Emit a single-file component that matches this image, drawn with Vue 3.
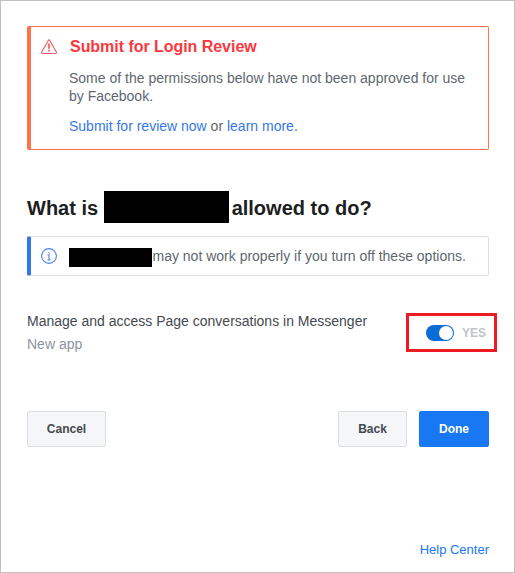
<script setup>
import { ref } from 'vue'

const enabled = ref(true)
</script>

<template>
  <main class="dialog">
    <section class="notice warning">
      <svg class="icon" width="16" height="16" viewBox="0 0 16 16" fill="none">
        <path d="M7.3 1.4Q8 .2 8.7 1.4L15.3 13Q15.9 14.3 14.6 14.5H1.4Q.1 14.3 .7 13Z" stroke="#fa5a62" stroke-width="1.1" />
        <path d="M8 4.4V9.8M8 10.8V12.4" stroke="#fa4b55" stroke-width="1.6" />
      </svg>
      <div class="notice-body">
        <h2>Submit for Login Review</h2>
        <p class="message">Some of the permissions below have not been approved for use<br>by Facebook.</p>
        <p class="links"><a>Submit for review now</a> or <a>learn more</a>.</p>
      </div>
    </section>

    <h1>
      <span>What is</span>
      <span class="redacted app-name"></span>
      <span class="question">allowed to do?</span>
    </h1>

    <section class="notice info">
      <svg class="icon" width="16" height="16" viewBox="0 0 16 16" fill="none">
        <circle cx="8" cy="8" r="7.4" stroke="#4a82ea" stroke-width="1.1" />
        <path d="M8 4V5.6M6.5 7H8V11.6M6.5 11.7H9.5" stroke="#6f9cef" stroke-width="1.4" />
      </svg>
      <span class="redacted short-name"></span>
      <span class="info-text">may not work properly if you turn off these options.</span>
    </section>

    <section class="permission">
      <div class="permission-text">
        <div class="label">Manage and access Page conversations in Messenger</div>
        <div class="sub">New app</div>
      </div>
      <div class="switch-frame">
        <button class="switch" :class="{ on: enabled }" @click="enabled = !enabled"><i></i></button>
        <span class="state">{{ enabled ? 'YES' : 'NO' }}</span>
      </div>
    </section>

    <div class="actions">
      <button class="btn cancel">Cancel</button>
      <button class="btn back">Back</button>
      <button class="btn primary">Done</button>
    </div>

    <footer><a>Help Center</a></footer>
  </main>
</template>

<style>
body {
  margin: 0;
  background: #fff;
}
</style>

<style scoped>
.dialog {
  box-sizing: border-box;
  width: 515px;
  height: 573px;
  padding: 25px 25px 0 26px;
  border: 1px solid #c0c0c0;
  overflow: hidden;
  background: #fff;
  color: #606770;
  font: 14px/18px "Liberation Sans", Arial, sans-serif;
  white-space: nowrap;
}
h1, h2, p {
  margin: 0;
}
a {
  color: #3578e5;
}
.notice {
  box-sizing: border-box;
  display: flex;
  border: 1px solid #dadde1;
  border-left: 4px solid #3578e5;
  border-radius: 2px;
}
.icon {
  flex: none;
  margin-left: 10px;
}
.warning {
  height: 124px;
  border-color: #fb724b;
}
.warning .icon {
  margin-top: 12px;
}
.notice-body {
  margin-left: 12px;
  padding-top: 10px;
}
h2 {
  margin-left: 1px;
  color: #fa383e;
  font-size: 16px;
  line-height: 20px;
  letter-spacing: -0.04px;
}
.message {
  margin-top: 12px;
}
.links {
  margin-top: 12px;
}
h1 {
  display: flex;
  align-items: center;
  height: 32px;
  margin-top: 41px;
  color: #1c1e21;
  font-size: 20px;
  line-height: 24px;
}
h1 span:not(.redacted) {
  padding-top: 2px;
}
.redacted {
  flex: none;
  background: #000;
}
.app-name {
  width: 125px;
  height: 32px;
  margin: 0 2.5px 0 6px;
}
.info {
  align-items: center;
  height: 40px;
  margin-top: 13px;
}
.short-name {
  width: 83px;
  height: 19px;
  margin: 3px 0.5px 0 12px;
}
.permission {
  display: flex;
  justify-content: space-between;
  height: 39px;
  margin: 37px -8px 0 0;
}
.permission-text {
  margin-top: -1px;
}
.label {
  color: #444950;
}
.sub {
  margin-top: 5px;
  color: #8d949e;
}
.switch-frame {
  box-sizing: border-box;
  display: flex;
  align-items: center;
  width: 91px;
  height: 39px;
  padding-left: 17px;
  border: 3px solid #ed1c24;
}
.switch {
  box-sizing: border-box;
  display: flex;
  width: 28px;
  height: 16px;
  padding: 1px;
  border: 0;
  border-radius: 8px;
  background: #bec3c9;
}
.switch.on {
  justify-content: flex-end;
  background: #0a6cd6;
}
.switch i {
  width: 14px;
  height: 14px;
  border-radius: 50%;
  background: #fff;
}
.state {
  margin-left: 8px;
  color: #bec3c9;
  font-size: 12px;
  font-weight: bold;
}
.actions {
  display: flex;
  margin-top: 59px;
}
.btn {
  box-sizing: border-box;
  height: 36px;
  padding: 0;
  border: 1px solid #dadde1;
  border-radius: 2px;
  background: #f5f6f7;
  color: #444950;
  font: bold 12px/34px "Liberation Sans", Arial, sans-serif;
}
.cancel {
  width: 79px;
  margin-right: auto;
}
.back {
  width: 69px;
  margin-right: 12px;
}
.primary {
  width: 70px;
  border-color: #1877f2;
  background: #1877f2;
  color: #fff;
}
footer {
  margin-top: 94px;
  font-size: 13px;
  text-align: right;
}
footer a {
  color: #1877f2;
}
</style>
